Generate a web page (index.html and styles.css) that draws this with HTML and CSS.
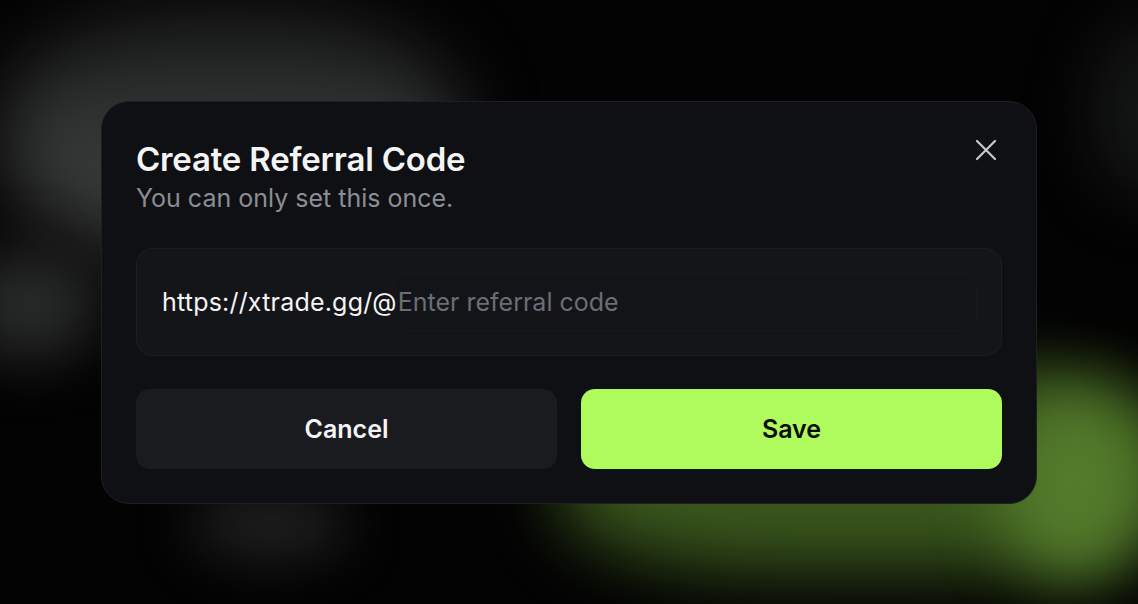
FILE: index.html
```html
<!DOCTYPE html>
<html lang="en">

<head>
    <meta charset="UTF-8">
    <meta name="viewport" content="width=device-width, initial-scale=1.0">
    <title>Create Referral Code</title>
    <link rel="stylesheet" href="styles.css">
</head>

<body>
    <div class="page">
        <!-- blurred glow shapes behind the dialog -->
        <div class="glow glow-grey-top"></div>
        <div class="glow glow-grey-left"></div>
        <div class="glow glow-grey-bottom"></div>
        <div class="glow glow-grey-right"></div>
        <div class="glow glow-green"></div>
        <div class="glow glow-green-hot"></div>

        <div class="modal">
            <div class="modal-head">
                <div>
                    <h2 class="modal-title">Create Referral Code</h2>
                    <p class="modal-sub">You can only set this once.</p>
                </div>
                <button class="close-btn" aria-label="Close">
                    <svg width="22" height="22" viewBox="0 0 22 22" fill="none">
                        <path d="M2 2L20 20M20 2L2 20" stroke="#c9cacd" stroke-width="2.2" stroke-linecap="round" />
                    </svg>
                </button>
            </div>
            <div class="code-field">
                <span class="prefix">https://xtrade.gg/@</span>
                <input class="code-input" type="text" placeholder="Enter referral code">
            </div>
            <div class="actions">
                <button class="btn btn-cancel">Cancel</button>
                <button class="btn btn-save">Save</button>
            </div>
        </div>
    </div>
</body>

</html>
```

FILE: styles.css
```css
* {
    padding: 0;
    margin: 0;
    box-sizing: border-box;
}

html,
body {
    height: 100%;
}

body {
    font-family: Inter, "Noto Sans", sans-serif;
    background: #030303;
    overflow: hidden;
}

.page {
    height: 100%;
    position: relative;
    display: flex;
    align-items: center;
    justify-content: center;
    overflow: hidden;
}

.glow {
    position: absolute;
    border-radius: 50%;
}

.glow-grey-top {
    left: 0;
    top: 10px;
    width: 460px;
    height: 250px;
    border-radius: 45%;
    background: linear-gradient(to bottom, #1c1d1d, #3a3b3b 65%, #333434);
    filter: blur(36px);
}

.glow-grey-left {
    left: -40px;
    top: 250px;
    width: 140px;
    height: 110px;
    background: #282929;
    filter: blur(28px);
}

.glow-grey-bottom {
    left: 190px;
    top: 490px;
    width: 160px;
    height: 70px;
    background: #1f1f1f;
    filter: blur(26px);
}

.glow-grey-right {
    left: 1090px;
    top: 20px;
    width: 120px;
    height: 180px;
    background: #141515;
    filter: blur(30px);
}

.glow-green {
    left: 560px;
    top: 370px;
    width: 620px;
    height: 200px;
    border-radius: 35%;
    background: #3a571d;
    filter: blur(34px);
}

.glow-green-hot {
    left: 1000px;
    top: 390px;
    width: 150px;
    height: 190px;
    background: #537b2b;
    filter: blur(32px);
}

.modal {
    position: relative;
    width: 936px;
    height: 403px;
    padding: 38px 34px 33px;
    background: #0f1014;
    border: 1px solid #1e1f23;
    border-radius: 28px;
    display: flex;
    flex-direction: column;
}

.modal-head {
    display: flex;
    justify-content: space-between;
    align-items: flex-start;
}

.modal-title {
    font-size: 33px;
    line-height: 38px;
    font-weight: 600;
    color: #f4f4f5;
    letter-spacing: -0.2px;
}

.modal-sub {
    margin-top: 5px;
    font-size: 25px;
    line-height: 30px;
    color: #8b8e94;
}

.close-btn {
    margin-top: -1px;
    margin-right: 5px;
    width: 22px;
    height: 22px;
    background: none;
    border: none;
    cursor: pointer;
}

.close-btn svg {
    display: block;
}

.code-field {
    margin-top: 35px;
    height: 108px;
    padding: 0 24px 0 25px;
    display: flex;
    align-items: center;
    background: #141519;
    border: 1px solid #1c1d21;
    border-radius: 16px;
}

.prefix {
    font-size: 25px;
    letter-spacing: 0.2px;
    color: #f4f4f5;
}

.code-input {
    flex: 1;
    height: 58px;
    padding: 0 0 0 1px;
    font-family: inherit;
    font-size: 25px;
    color: #f4f4f5;
    background: #131418;
    border: 1px solid #17181c;
    border-left: none;
    border-radius: 10px;
    outline: none;
}

.code-input::placeholder {
    color: #6b6e75;
}

.actions {
    margin-top: 33px;
    display: flex;
    gap: 24px;
}

.btn {
    flex: 1;
    height: 80px;
    border: none;
    border-radius: 14px;
    font-family: inherit;
    font-size: 25px;
    font-weight: 600;
    cursor: pointer;
}

.btn-cancel {
    background: #1a1b1f;
    color: #f4f4f5;
}

.btn-save {
    background: #affa5c;
    color: #0b0c0e;
}
```
